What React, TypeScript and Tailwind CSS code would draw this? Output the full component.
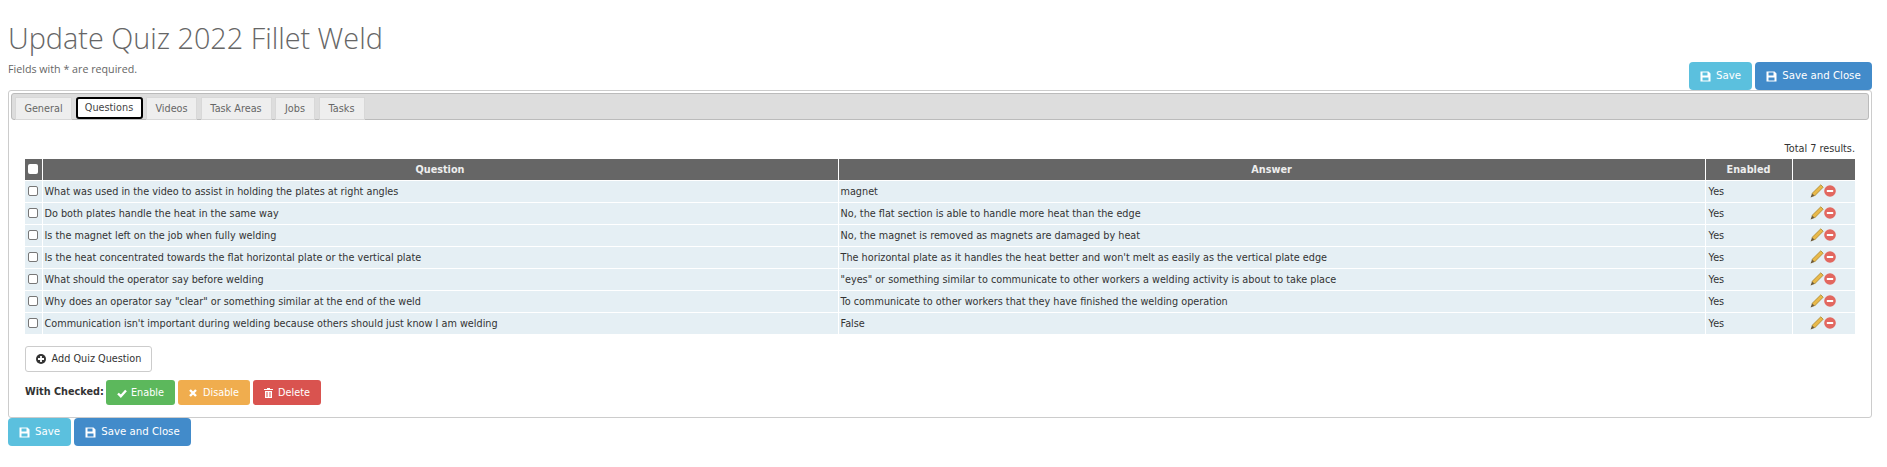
import React from "react";

const rows = [
  ["What was used in the video to assist in holding the plates at right angles", "magnet"],
  ["Do both plates handle the heat in the same way", "No, the flat section is able to handle more heat than the edge"],
  ["Is the magnet left on the job when fully welding", "No, the magnet is removed as magnets are damaged by heat"],
  ["Is the heat concentrated towards the flat horizontal plate or the vertical plate", "The horizontal plate as it handles the heat better and won't melt as easily as the vertical plate edge"],
  ["What should the operator say before welding", "\"eyes\" or something similar to communicate to other workers a welding activity is about to take place"],
  ["Why does an operator say \"clear\" or something similar at the end of the weld", "To communicate to other workers that they have finished the welding operation"],
  ["Communication isn't important during welding because others should just know I am welding", "False"],
];

const tabs = [["General", "w-[57px]"], ["Questions", "w-[67px]"], ["Videos", "w-[51px]"], ["Task Areas", "w-[71px]"], ["Jobs", "w-[40px]"], ["Tasks", "w-[46px]"]];

function Pencil() {
  return (
    <svg width="14" height="14" viewBox="0 0 14 14">
      <path d="M10.8 0.8 L13.2 3.2 L4.5 12 L2 9.5 Z" fill="#e9b949" stroke="#a9862f" strokeWidth="0.8" />
      <path d="M2 9.5 L4.5 12 L0.6 13.4 Z" fill="#6b5733" />
    </svg>
  );
}

function Minus() {
  return (
    <svg width="12" height="12" viewBox="0 0 12 12">
      <circle cx="6" cy="6" r="5.8" fill="#e2675f" />
      <rect x="2.8" y="5" width="6.4" height="2" rx="0.5" fill="#fff" />
    </svg>
  );
}

function Floppy() {
  return (
    <svg width="11" height="11" viewBox="0 0 11 11">
      <path fillRule="evenodd" fill="currentColor" d="M0.5 0.5 H8.5 L10.5 2.5 V10.5 H0.5 Z M2.5 1.5 V4.5 H7.5 V1.5 Z M2.5 6.5 V9.5 H8.5 V6.5 Z" />
    </svg>
  );
}

function SaveButtons() {
  return (
    <div className="flex gap-[3px] text-[10.2px] text-white">
      <button className="flex h-[28px] w-[63px] items-center justify-center gap-[5px] rounded-[4px] bg-[#5bc0de]">
        <Floppy />Save
      </button>
      <button className="flex h-[28px] w-[117px] items-center justify-center gap-[5px] rounded-[4px] bg-[#428bca]">
        <Floppy />Save and Close
      </button>
    </div>
  );
}

export default function App() {
  return (
    <div className="h-[467px] bg-white pl-[8px] pr-[15px] text-[#333] font-['Verdana','DejaVu_Sans',sans-serif] text-[9.7px]">
      <h1 className="pt-[19px] font-['Open_Sans',sans-serif] text-[28.8px] font-light leading-[38px] text-[#666]">Update Quiz 2022 Fillet Weld</h1>
      <div className="flex h-[33px] items-start justify-between">
        <p className="pt-[5px] text-[10.7px] leading-[14px] text-[#666] font-['Open_Sans',sans-serif]">Fields with * are required.</p>
        <div className="pt-[5px]"><SaveButtons /></div>
      </div>
      <div className="h-[328px] rounded-[3px] border border-[#ccc] px-[2px] pt-[2px]">
        <div className="flex h-[27px] gap-[3.5px] rounded-[3px] border border-[#bbb] bg-[#ddd] pl-[3px] pt-[3px]">
          {tabs.map(([t, w], i) => (
            <div key={t} className={i === 1
              ? `${w} flex h-[22px] items-center justify-center rounded-[3px] border-2 border-black bg-white pt-[1px] text-[#444]`
              : `${w} flex h-[23px] items-center justify-center border border-[#d8d8d8] bg-[#eee] pt-[1px] text-[#666]`}>{t}</div>
          ))}
        </div>
        <div className="px-[14px]">
          <div className="h-[39px] pt-[22px] text-right leading-[13px]">Total 7 results.</div>
          <table className="w-full table-fixed border-collapse">
            <colgroup>
              <col className="w-[17px]" />
              <col className="w-[796px]" />
              <col className="w-[867px]" />
              <col className="w-[87px]" />
              <col />
            </colgroup>
            <thead>
              <tr className="h-[21px] bg-[#666] text-white">
                <th className="border-r border-white"><input type="checkbox" className="block mx-auto h-[10px] w-[10px] appearance-none rounded-[2px] bg-white" /></th>
                <th className="border-r border-white pt-[2px] font-bold text-[#eee]">Question</th>
                <th className="border-r border-white pt-[2px] font-bold text-[#eee]">Answer</th>
                <th className="border-r border-white pt-[2px] font-bold text-[#eee]">Enabled</th>
                <th></th>
              </tr>
            </thead>
            <tbody>
              {rows.map(([q, a]) => (
                <tr key={q} className="h-[22px] border-t border-white bg-[#e5eff4]">
                  <td className="border-r border-white"><div className="mx-auto h-[10px] w-[10px] rounded-[2px] border border-[#777] bg-white" /></td>
                  <td className="border-r border-white pl-[2px] pt-[2px] whitespace-nowrap">{q}</td>
                  <td className="border-r border-white pl-[2px] pt-[2px] whitespace-nowrap">{a}</td>
                  <td className="border-r border-white pl-[3px] pt-[2px]">Yes</td>
                  <td><div className="flex items-center justify-center pr-[2px]"><Pencil /><Minus /></div></td>
                </tr>
              ))}
            </tbody>
          </table>
          <button className="mt-[12px] flex h-[26px] w-[127px] items-center justify-center gap-[6px] rounded-[3px] border border-[#ccc] bg-white text-[#333]">
            <svg width="10" height="10" viewBox="0 0 10 10"><circle cx="5" cy="5" r="5" fill="#333" /><path d="M2 5H8M5 2V8" stroke="#fff" strokeWidth="1.8" /></svg>
            Add Quiz Question
          </button>
          <div className="mt-[8px] flex items-center gap-[3px] text-white">
            <b className="mr-[1px] w-[77px] whitespace-nowrap text-[#333]">With Checked:</b>
            <button className="flex h-[25px] w-[69px] items-center justify-center gap-[4px] rounded-[3px] bg-[#5cb85c] pt-[1px]">
              <svg width="10" height="9" viewBox="0 0 10 9"><path d="M1 4.5L3.8 7.2L9 1.5" fill="none" stroke="currentColor" strokeWidth="2.4" /></svg>Enable
            </button>
            <button className="flex h-[25px] w-[72px] items-center justify-center gap-[6px] rounded-[3px] bg-[#f0ad4e] pt-[1px]">
              <svg width="8" height="8" viewBox="0 0 8 8"><path d="M1 1L7 7M7 1L1 7" fill="none" stroke="currentColor" strokeWidth="2.4" /></svg>Disable
            </button>
            <button className="flex h-[25px] w-[68px] items-center justify-center gap-[5px] rounded-[3px] bg-[#d9534f] pt-[1px]">
              <svg width="9" height="10" viewBox="0 0 9 10"><path fill="currentColor" fillRule="evenodd" d="M3 0H6V1H9V2H0V1H3Z M1 3H8V10H1Z M2.5 4V9H3.5V4Z M5.5 4V9H6.5V4Z" /></svg>Delete
            </button>
          </div>
        </div>
      </div>
      <div><SaveButtons /></div>
    </div>
  );
}
